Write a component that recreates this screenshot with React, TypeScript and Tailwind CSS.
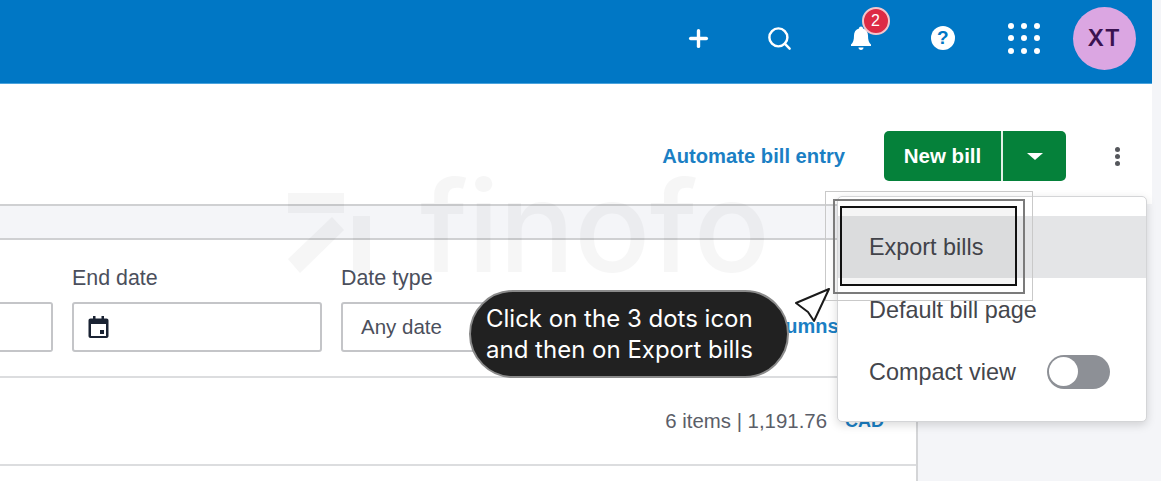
import { Plus, Search } from 'lucide-react';

const sans = 'font-["Liberation_Sans",Arial,sans-serif]';

function TopIcon({ children }: { children: React.ReactNode }) {
  return <div className="relative flex h-full w-[81.5px] items-center justify-center text-white">{children}</div>;
}

function Header() {
  return (
    <div className="flex h-[84px] w-[1152px] items-center justify-end border-b border-[#4aa3dd] bg-[#0077c5] pb-[7px] pr-[16px]">
      <TopIcon>
        <Plus size={27} strokeWidth={3} />
      </TopIcon>
      <TopIcon>
        <Search size={27} strokeWidth={2.2} />
      </TopIcon>
      <TopIcon>
        <svg width="24" height="26" viewBox="0 0 24 26" fill="white">
          <path d="M12 1.5c1.2 0 2 .8 2 1.9C17.3 4.400 19 7 19 10.500c0 4.500.8 7 3 9v1.500H2v-1.500c2.200-2 3-4.500 3-9C5 7 6.700 4.400 10 3.400c0-1.100.8-1.900 2-1.900z" />
          <path d="M9.500 22.500h5c0 1.500-1 2.500-2.500 2.500s-2.500-1-2.500-2.500z" />
        </svg>
        <div className="absolute left-[41px] top-[7px] flex h-[28px] w-[28px] items-center justify-center rounded-full border-2 border-[#f3c5cc] bg-[#dd2a45] font-['Liberation_Sans',sans-serif] text-[16px] text-white">
          2
        </div>
      </TopIcon>
      <TopIcon>
        <div className="flex h-[24px] w-[24px] items-center justify-center rounded-full bg-white font-['Liberation_Sans',sans-serif] text-[19px] font-bold text-[#0077c5]">
          ?
        </div>
      </TopIcon>
      <TopIcon>
        <div className="grid grid-cols-3 gap-x-[7px] gap-y-[6.500px]">
          {Array.from({ length: 9 }).map((_, i) => (
            <span key={i} className="h-[6px] w-[6px] rounded-full bg-white" />
          ))}
        </div>
      </TopIcon>
      <div className="ml-[8px] flex h-[63px] w-[63px] items-center justify-center rounded-full bg-[#dba6e2] font-['Inter',sans-serif] text-[23px] font-semibold tracking-[1.5px] text-[#3a1250]">
        XT
      </div>
    </div>
  );
}

function Toolbar() {
  return (
    <div className={`flex h-[120px] w-[1152px] items-start justify-end bg-white pr-[32px] pt-[47px] ${sans}`}>
      <a className="mr-[39px] mt-[12px] text-[20.200px] font-bold leading-[26px] text-[#1b7fc4]">Automate bill entry</a>
      <div className="flex h-[50px] w-[182px] overflow-hidden rounded-[5px] bg-[#05813a] text-white">
        <div className="flex w-[117px] items-center justify-center text-[20.500px] font-bold">New bill</div>
        <div className="w-[2px] bg-[#e3f1e8]" />
        <div className="flex flex-1 items-center justify-center">
          <span className="mt-[1px] h-0 w-0 border-x-[8px] border-t-[7px] border-x-transparent border-t-white" />
        </div>
      </div>
      <div className="ml-[49px] mt-[16px] flex flex-col gap-[2px]">
        <span className="h-[5px] w-[5px] rounded-full bg-[#55575c]" />
        <span className="h-[5px] w-[5px] rounded-full bg-[#55575c]" />
        <span className="h-[5px] w-[5px] rounded-full bg-[#55575c]" />
      </div>
    </div>
  );
}

function Field({ label, width, children }: { label: string; width: string; children?: React.ReactNode }) {
  return (
    <div className={`flex flex-col ${width}`}>
      <div className="h-[25px] text-[21.400px] font-medium leading-[25px] text-[#4b4f5c]">{label}</div>
      <div className="mt-[11px] flex h-[50px] items-center rounded-[3px] border-2 border-[#c4c5c8] bg-white pl-[14px] text-[20.500px] text-[#4b4f5c]">
        {children}
      </div>
    </div>
  );
}

function Filters() {
  return (
    <div className={`flex h-[138px] items-start gap-[19px] border-b-2 border-[#dcdddf] pt-[26px] ${sans}`}>
      <div className="mt-[36px] h-[50px] w-[53px] rounded-r-[3px] border-2 border-l-0 border-[#c4c5c8]" />
      <Field label="End date" width="w-[250px]">
        <svg width="21" height="22" viewBox="0 0 21 22" fill="#1a2333">
          <path d="M5 0h2.500v2.500h6V0H16v2.500h2.500c1.200 0 2 .8 2 2V20c0 1.200-.8 2-2 2h-16c-1.200 0-2-.8-2-2V4.500c0-1.200.8-2 2-2H5V0zM3 8v12h15V8H3z" />
          <rect x="12" y="14" width="4" height="4" />
        </svg>
      </Field>
      <Field label="Date type" width="w-[220px]">
        <span className="ml-[4px]">Any date</span>
      </Field>
      <a className="absolute left-[753px] top-[314px] text-[20px] font-bold leading-[24px] text-[#1b7fc4]">Columns</a>
    </div>
  );
}

function Totals() {
  return (
    <div className={`flex h-[88px] items-start justify-end border-b-2 border-[#dcdddf] pr-[32px] pt-[30px] leading-[26px] ${sans}`}>
      <span className="text-[20.400px] text-[#5b5e68]">6 items | 1,191.76</span>
      <span className="ml-[18px] text-[18px] font-bold text-[#1b7fc4]">CAD</span>
    </div>
  );
}

function Watermark() {
  return (
    <div className="pointer-events-none absolute left-[286px] top-[150px] flex items-center opacity-[0.03]">
      <svg width="86" height="86" viewBox="0 0 86 86" className="mt-[22px]">
        <path d="M2 2h56v20H2zM67 25h17v57H67zM46 26l12 13L14 82 2 68z" fill="#000" />
      </svg>
      <span className="ml-[48px] mt-[6px] font-['Inter',sans-serif] text-[126px] font-medium leading-[140px] tracking-[-0.5px] text-black">
        finofo
      </span>
    </div>
  );
}

function ExportMenu() {
  return (
    <div className={`absolute left-[837px] top-[196px] flex h-[226px] w-[310px] flex-col rounded-[5px] border border-[#d4d5d7] bg-white pt-[19px] text-[23.400px] text-[#44464c] shadow-[0_3px_10px_rgba(0,0,0,0.15)] ${sans}`}>
      <div className="flex h-[62px] items-center bg-[#e4e5e7] pl-[31px] pt-[1px]">Export bills</div>
      <div className="flex h-[62px] items-center pl-[31px] pt-[3px]">Default bill page</div>
      <div className="flex h-[62px] items-center pl-[31px]">
        <span className="mt-[3px]">Compact view</span>
        <div className="ml-[31px] mt-[1px] flex h-[34px] w-[63px] items-center rounded-full bg-[#8d9096] pl-[2px]">
          <span className="h-[29px] w-[29px] rounded-full bg-white" />
        </div>
      </div>
    </div>
  );
}

function Callout() {
  return (
    <>
      <div className="absolute left-[825px] top-[191px] h-[110px] w-[208px] border border-[#c9c9c9]" />
      <div className="absolute left-[833px] top-[199px] h-[95px] w-[192px] border-2 border-[#7b7b7b]" />
      <div className="absolute left-[840px] top-[206px] h-[80px] w-[177px] border-2 border-[#111] bg-black/[0.04]" />
      <div className="absolute left-[469px] top-[290px] flex h-[88px] w-[320px] items-center rounded-[44px] border-2 border-[#8a8a8a] bg-[#212121] pl-[15px] font-['Inter',sans-serif] text-[24px] font-normal leading-[31px] text-white">
        <div>
          Click on the 3 dots icon
          <br />
          and then on Export bills
        </div>
      </div>
      <svg className="absolute left-[794px] top-[287px]" width="38" height="36" viewBox="0 0 38 36" fill="white" stroke="#1a1a1a" strokeWidth="2" strokeLinejoin="round">
        <path d="M35 2 2 16l12 9 6 9z" />
      </svg>
    </>
  );
}

export default function App() {
  return (
    <div className="relative h-[481px] w-[1161px] overflow-hidden bg-[#f4f5f8]">
      <Header />
      <Toolbar />
      <div className="h-[397px] w-[918px] border-r-2 border-[#d4d5d7] bg-white">
        <div className="h-[36px] border-y-2 border-[#cfd0d2] bg-[#f4f5f8]" />
        <Filters />
        <Totals />
      </div>
      <Watermark />
      <ExportMenu />
      <Callout />
    </div>
  );
}
